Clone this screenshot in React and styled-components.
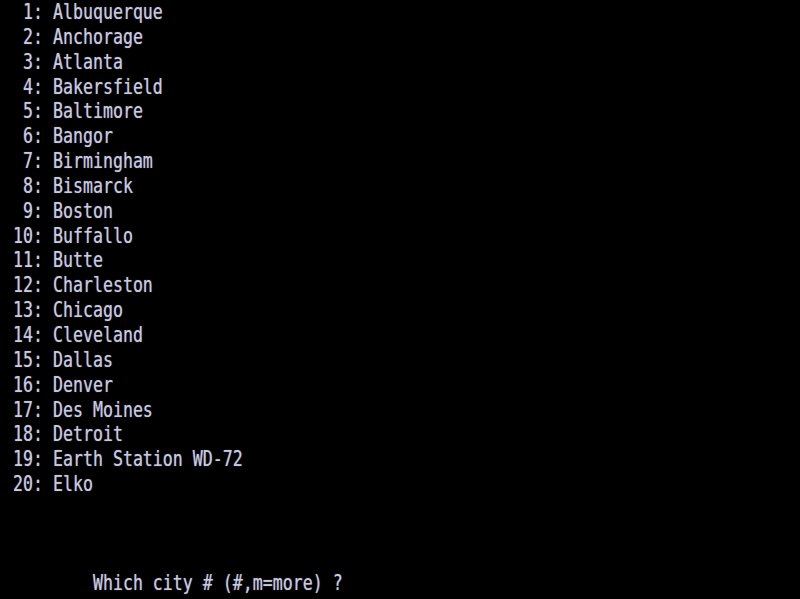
import React from "react";
import styled, { createGlobalStyle } from "styled-components";

const Global = createGlobalStyle`
  html, body {
    margin: 0;
    padding: 0;
    background: #000;
  }
  #root {
    min-height: 599px;
    background: #000;
  }
`;

const Screen = styled.div`
  box-sizing: border-box;
  width: 800px;
  height: 599px;
  overflow: hidden;
  background: #000;
  padding: 1px 0 0 13px;
  display: flex;
  flex-direction: column;
  font-family: "DejaVu Sans Mono", "Liberation Mono", monospace;
  font-size: 16.6px;
  color: #c9c9e2;
`;

const Row = styled.div`
  height: 24.85px;
  line-height: 24.85px;
  white-space: pre;
  flex: none;
`;

const Glyphs = styled.span`
  display: inline-block;
  transform: scaleY(1.28);
  transform-origin: center;
  text-shadow: 0 0 1px rgba(201, 201, 226, 0.6);
`;

const cities = [
  "Albuquerque",
  "Anchorage",
  "Atlanta",
  "Bakersfield",
  "Baltimore",
  "Bangor",
  "Birmingham",
  "Bismarck",
  "Boston",
  "Buffallo",
  "Butte",
  "Charleston",
  "Chicago",
  "Cleveland",
  "Dallas",
  "Denver",
  "Des Moines",
  "Detroit",
  "Earth Station WD-72",
  "Elko",
];

export default function App() {
  const rows = cities.map((c, i) => `${String(i + 1).padStart(2, " ")}: ${c}`);
  rows.push("", "", "", "        Which city # (#,m=more) ?");
  return (
    <>
      <Global />
      <Screen>
        {rows.map((r, i) => (
          <Row key={i}>
            <Glyphs>{r || " "}</Glyphs>
          </Row>
        ))}
      </Screen>
    </>
  );
}
